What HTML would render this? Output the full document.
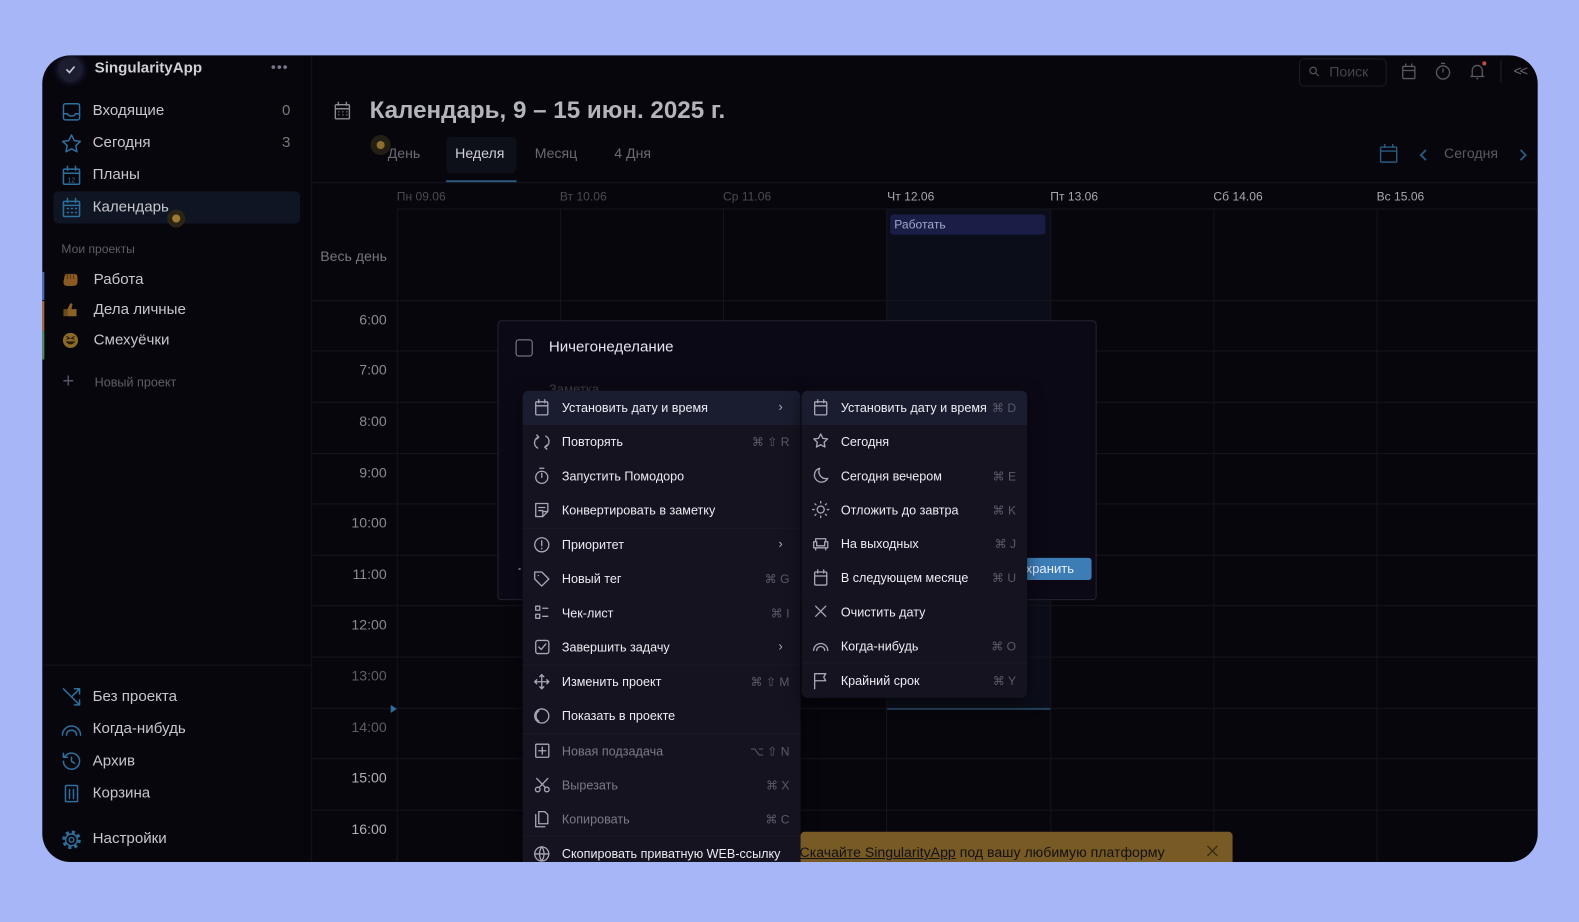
<!DOCTYPE html>
<html><head><meta charset="utf-8">
<style>
*{margin:0;padding:0;box-sizing:border-box}
body{width:1579px;height:916px;background:#a6b6f6;font-family:"Liberation Sans","DejaVu Sans",sans-serif;position:relative;overflow:hidden}
.wrap{position:absolute;left:0;top:0;width:1579px;height:916px;transform:scale(1.007);transform-origin:0 0}
.app{position:absolute;left:42px;top:55px;width:1485px;height:801px;background:#07060d;border-radius:28px;overflow:hidden}
.a{position:absolute;white-space:nowrap}
.t{line-height:20px;height:20px}
svg{position:absolute;overflow:visible}
.nav{font-size:15px;color:#c6c6ce}
.ic{fill:none;stroke:#2f6f9e;stroke-width:1.5;stroke-linecap:round;stroke-linejoin:round}
.mi{fill:none;stroke:#a8a8b8;stroke-width:1.3;stroke-linecap:round;stroke-linejoin:round}
.m{font-size:12.5px;color:#ececf2}
.sc{font-size:12px;color:#5a5a68;text-align:right}
.dim{color:#7a7a86}
.hl{position:absolute;background:#1b1a29;height:1px}
.vl{position:absolute;background:#16151f;width:1px}
.hr{position:absolute;background:#16151f;height:1px}
.tm{font-size:14px;color:#8a8a92;text-align:right;width:60px}
.dh{font-size:12px;color:#4a4a55}
</style></head><body><div class="wrap">
<div class="app">
<div class="vl" style="left:267px;top:0;height:801px;background:#15141d"></div>
<div class="hr" style="left:0;top:605px;width:267px;background:#15141d"></div>
<div class="a" style="left:17px;top:3px;width:22px;height:22px;border-radius:50%;background:#1c1d2e;box-shadow:0 0 8px #3a3c70"></div>
<svg style="left:23px;top:9px" width="10" height="10"><path d="M1 5 L4 8 L9 2" fill="none" stroke="#c8c8d8" stroke-width="1.6"/></svg>
<div class="a t" style="left:52px;top:3px;font-size:15px;font-weight:bold;color:#cfcfd8">SingularityApp</div>
<div class="a t" style="left:227px;top:1px;font-size:14px;color:#77778a;letter-spacing:1px">•••</div>
<div class="a" style="left:11px;top:135px;width:245px;height:32px;background:#0f1522;border-radius:5px"></div>
<svg style="left:20px;top:47px" width="18" height="18" class="ic"><rect x="1" y="1" width="16" height="16" rx="2"/><path d="M1 11h4c1 3 7 3 8 0h4"/></svg>
<div class="a t nav" style="left:50px;top:45px">Входящие</div><div class="a t nav" style="left:238px;top:45px;color:#777">0</div>
<svg style="left:19px;top:78px" width="20" height="20" class="ic"><path d="M10 1l2.7 5.6 6.1.8-4.5 4.2 1.1 6.1L10 14.8 4.6 17.7l1.1-6.1L1.2 7.4l6.1-.8z"/></svg>
<div class="a t nav" style="left:50px;top:77px">Сегодня</div><div class="a t nav" style="left:238px;top:77px;color:#777">3</div>
<svg style="left:20px;top:110px" width="18" height="18" class="ic"><rect x="1" y="3" width="16" height="15" rx="1"/><path d="M1 7h16M5 0v4M13 0v4"/><text x="5" y="16" font-size="7" fill="#2f6f9e" stroke="none" font-family="Liberation Sans">12</text></svg>
<div class="a t nav" style="left:50px;top:109px">Планы</div>
<svg style="left:20px;top:142px" width="18" height="18" class="ic"><rect x="1" y="3" width="16" height="15" rx="1"/><path d="M1 7h16M5 0v4M13 0v4M5 10h1M9 10h1M13 10h1M5 14h1M9 14h1M13 14h1"/></svg>
<div class="a t nav" style="left:50px;top:141px">Календарь</div>
<div class="a" style="left:124px;top:153px;width:18px;height:18px;border-radius:50%;background:#2a2416"></div>
<div class="a" style="left:129px;top:158px;width:8px;height:8px;border-radius:50%;background:#9e7a30"></div>
<div class="a t" style="left:19px;top:182px;font-size:12px;color:#5e5e6a">Мои проекты</div>
<div class="a" style="left:0;top:215px;width:2px;height:28px;background:#4a6ab0"></div>
<div class="a" style="left:0;top:244px;width:2px;height:30px;background:#b06a30"></div>
<div class="a" style="left:0;top:274px;width:2px;height:28px;background:#4a9060"></div>
<svg style="left:20px;top:216px" width="16" height="14"><path d="M2 4 Q2 1 5 1 L12 1 Q15 1 15 5 L15 9 Q15 13 10 13 L5 13 Q1 13 1 9 Z" fill="#8a5a22"/><path d="M5 1v5M8 1v5M11 1v5" stroke="#5a3812" stroke-width="1"/></svg>
<div class="a t nav" style="left:51px;top:213px">Работа</div>
<svg style="left:20px;top:245px" width="16" height="15"><path d="M5 14 L14 14 L14 7 L9 7 L10 2 Q8 0 7 3 L5 7 Z" fill="#8a6225"/><rect x="1" y="7" width="4" height="7" fill="#6a4a1a"/></svg>
<div class="a t nav" style="left:51px;top:243px">Дела личные</div>
<svg style="left:20px;top:275px" width="16" height="16"><circle cx="8" cy="8" r="7.5" fill="#8a6a28"/><path d="M3 9 Q8 15 13 9 Z" fill="#2a1a0a"/><path d="M4 4l3 2-3 1M12 4l-3 2 3 1" stroke="#2a1a0a" fill="none" stroke-width="1"/></svg>
<div class="a t nav" style="left:51px;top:273px">Смехуёчки</div>
<div class="a t" style="left:20px;top:314px;font-size:20px;color:#55556a">+</div>
<div class="a t" style="left:52px;top:315px;font-size:12.5px;color:#5e5e6a">Новый проект</div>
<svg style="left:20px;top:628px" width="18" height="18" class="ic"><path d="M1 1l16 16M12 1h5v5M17 1L10 8M12 17h5v-5"/></svg>
<div class="a t nav" style="left:50px;top:627px">Без проекта</div>
<svg style="left:19px;top:664px" width="20" height="12" class="ic"><path d="M1 11a9 9 0 0118 0M5 11a5 5 0 0110 0"/></svg>
<div class="a t nav" style="left:50px;top:659px">Когда-нибудь</div>
<svg style="left:20px;top:692px" width="18" height="18" class="ic"><path d="M2 5a8 8 0 11-1 4M1 1v4h4M9 5v4l3 2"/></svg>
<div class="a t nav" style="left:50px;top:691px">Архив</div>
<svg style="left:21px;top:724px" width="16" height="18" class="ic"><rect x="2" y="1" width="12" height="16" rx="1"/><path d="M6 5v9M10 5v9"/></svg>
<div class="a t nav" style="left:50px;top:723px">Корзина</div>
<svg style="left:19px;top:769px" width="20" height="20"><circle cx="10" cy="10" r="7.5" fill="none" stroke="#2f6f9e" stroke-width="3.5" stroke-dasharray="3 2.9"/><circle cx="10" cy="10" r="5.8" fill="#07060d" stroke="#2f6f9e" stroke-width="1.4"/><circle cx="10" cy="10" r="2.4" fill="none" stroke="#2f6f9e" stroke-width="1.4"/></svg>
<div class="a t nav" style="left:50px;top:768px">Настройки</div>

<svg style="left:290px;top:46px" width="16" height="18" fill="none" stroke="#8a8a92" stroke-width="1.4"><rect x="1" y="3" width="14" height="14" rx="1"/><path d="M1 7h14M4 0v4M12 0v4M4 10h1M8 10h1M12 10h1M4 13h1M8 13h1M12 13h1"/></svg>
<div class="a" style="left:325px;top:40px;font-size:24px;font-weight:bold;color:#b4b4bc;line-height:30px">Календарь, 9 – 15 июн. 2025 г.</div>
<div class="a" style="left:401px;top:81px;width:70px;height:36px;background:#0d1018;border-radius:5px"></div>
<div class="a" style="left:401px;top:124px;width:70px;height:2px;background:#2b5a80"></div>
<div class="a t" style="left:343px;top:87px;font-size:14px;color:#6a6a74">День</div>
<div class="a t" style="left:410px;top:87px;font-size:14px;color:#d0d0d8">Неделя</div>
<div class="a t" style="left:489px;top:87px;font-size:14px;color:#6a6a74">Месяц</div>
<div class="a t" style="left:568px;top:87px;font-size:14px;color:#6a6a74">4 Дня</div>
<div class="a" style="left:326px;top:79px;width:20px;height:20px;border-radius:50%;background:#231f15"></div>
<div class="a" style="left:332px;top:85px;width:8px;height:8px;border-radius:50%;background:#8e6e2c"></div>
<div class="a" style="left:1248px;top:3px;width:87px;height:28px;border:1px solid #1c1c26;border-radius:5px"></div>
<svg style="left:1258px;top:11px" width="10" height="10" fill="none" stroke="#555" stroke-width="1.2"><circle cx="4" cy="4" r="3.2"/><path d="M6.5 6.5L9.5 9.5"/></svg>
<div class="a t" style="left:1278px;top:6px;font-size:14px;color:#45454f">Поиск</div>
<svg style="left:1350px;top:8px" width="14" height="16" fill="none" stroke="#5a5a64" stroke-width="1.3"><rect x="1" y="3" width="12" height="12" rx="1"/><path d="M1 7h12M4 0v3M10 0v3"/></svg>
<svg style="left:1383px;top:7px" width="16" height="18" fill="none" stroke="#5a5a64" stroke-width="1.3"><circle cx="8" cy="10" r="6.5"/><path d="M6 1h4M8 10V6"/></svg>
<svg style="left:1417px;top:7px" width="16" height="18" fill="none" stroke="#5a5a64" stroke-width="1.3"><path d="M3 13V8a5 5 0 0110 0v5l1 1H2zM7 16h2"/></svg>
<div class="a" style="left:1430px;top:6px;width:4px;height:4px;border-radius:50%;background:#c0503a"></div>
<div class="a" style="left:1448px;top:5px;width:1px;height:22px;background:#22222c"></div>
<div class="a t" style="left:1461px;top:5px;font-size:14px;color:#6a6a74;letter-spacing:-2px">&lt;&lt;</div>
<svg style="left:1328px;top:88px" width="18" height="18" fill="none" stroke="#2a5c82" stroke-width="1.4"><rect x="1" y="3" width="16" height="15" rx="1"/><path d="M1 7h16M5 0v4M13 0v4"/></svg>
<svg style="left:1368px;top:93px" width="8" height="12" fill="none" stroke="#2a5c82" stroke-width="1.8"><path d="M6 1L1 6l5 5"/></svg>
<div class="a t" style="left:1392px;top:87px;font-size:14px;color:#5a5a64">Сегодня</div>
<svg style="left:1467px;top:93px" width="8" height="12" fill="none" stroke="#2a5c82" stroke-width="1.8"><path d="M1 1l5 5-5 5"/></svg>

<div class="hr" style="left:268px;top:126px;width:1217px"></div>
<div class="a" style="left:839px;top:152px;width:162px;height:498px;background:#0b0e18"></div>
<div class="hr" style="left:352px;top:152px;width:1133px"></div>
<div class="vl" style="left:352px;top:152px;height:650px"></div>
<div class="vl" style="left:514px;top:152px;height:650px"></div>
<div class="vl" style="left:676px;top:152px;height:650px"></div>
<div class="vl" style="left:838px;top:152px;height:650px"></div>
<div class="vl" style="left:1001px;top:152px;height:650px"></div>
<div class="vl" style="left:1163px;top:152px;height:650px"></div>
<div class="vl" style="left:1325px;top:152px;height:650px"></div>
<div class="a dh" style="left:352px;top:133px">Пн 09.06</div>
<div class="a dh" style="left:514px;top:133px">Вт 10.06</div>
<div class="a dh" style="left:676px;top:133px">Ср 11.06</div>
<div class="a dh" style="left:839px;top:133px;color:#a8a8b0">Чт 12.06</div>
<div class="a dh" style="left:1001px;top:133px;color:#a8a8b0">Пт 13.06</div>
<div class="a dh" style="left:1163px;top:133px;color:#a8a8b0">Сб 14.06</div>
<div class="a dh" style="left:1325px;top:133px;color:#a8a8b0">Вс 15.06</div>
<div class="a" style="left:842px;top:158px;width:154px;height:20px;background:#1a1d46;border-radius:3px;font-size:12px;color:#a0a6cc;line-height:20px;padding-left:4px">Работать</div>
<div class="a t" style="left:276px;top:189px;font-size:14px;color:#76767e">Весь день</div>
<div class="hr" style="left:268px;top:243px;width:1217px"></div>
<div class="hr" style="left:268px;top:293px;width:1217px"></div>
<div class="hr" style="left:268px;top:344px;width:1217px"></div>
<div class="hr" style="left:268px;top:395px;width:1217px"></div>
<div class="hr" style="left:268px;top:445px;width:1217px"></div>
<div class="hr" style="left:268px;top:496px;width:1217px"></div>
<div class="hr" style="left:268px;top:546px;width:1217px"></div>
<div class="hr" style="left:268px;top:597px;width:1217px"></div>
<div class="hr" style="left:268px;top:648px;width:1217px"></div>
<div class="hr" style="left:268px;top:698px;width:1217px"></div>
<div class="hr" style="left:268px;top:749px;width:1217px"></div>
<div class="a" style="left:839px;top:648px;width:162px;height:2px;background:#214058"></div>
<div class="a t tm" style="left:282px;top:252px">6:00</div>
<div class="a t tm" style="left:282px;top:302px">7:00</div>
<div class="a t tm" style="left:282px;top:353px">8:00</div>
<div class="a t tm" style="left:282px;top:404px">9:00</div>
<div class="a t tm" style="left:282px;top:454px">10:00</div>
<div class="a t tm" style="left:282px;top:505px">11:00</div>
<div class="a t tm" style="left:282px;top:555px">12:00</div>
<div class="a t tm" style="left:282px;top:606px;color:#5e5e66">13:00</div>
<div class="a t tm" style="left:282px;top:657px;color:#5e5e66">14:00</div>
<div class="a t tm" style="left:282px;top:707px;color:#b0b0b8">15:00</div>
<div class="a t tm" style="left:282px;top:758px;color:#b0b0b8">16:00</div>
<svg style="left:346px;top:645px" width="6" height="8"><path d="M0 0l6 4-6 4z" fill="#2f6f9e"/></svg>

<div class="a" style="left:452px;top:263px;width:595px;height:278px;background:#0c0916;border:1px solid #25232f;border-radius:4px"></div>
<div class="a" style="left:470px;top:282px;width:17px;height:17px;border:1.5px solid #8a8a96;border-radius:3px"></div>
<div class="a t" style="left:503px;top:280px;font-size:15px;color:#e4e4ec">Ничегонеделание</div>
<div class="a t" style="left:503px;top:322px;font-size:13px;color:#3e3e4a">Заметка</div>
<div class="a" style="left:950px;top:499px;width:92px;height:22px;background:#3d7db6;border-radius:3px;color:#e8f0ff;font-size:13px;line-height:22px;padding-left:10px">Сохранить</div>
<div class="a" style="left:473px;top:509px;width:2px;height:2px;background:#888"></div>

<div class="a" style="left:477px;top:333px;width:276px;height:480px;background:#15131f;border-radius:6px;box-shadow:0 4px 16px #0008"></div>
<div class="a" style="left:477px;top:333px;width:276px;height:34px;background:#1a1d30;border-radius:6px 6px 0 0"></div>
<div class="hl" style="left:477px;top:469px;width:276px"></div>
<div class="hl" style="left:477px;top:605px;width:276px"></div>
<div class="hl" style="left:477px;top:673px;width:276px"></div>
<div class="hl" style="left:477px;top:775px;width:276px"></div>
<svg style="left:489px;top:342px" width="14" height="16" class="mi"><rect x="1" y="2" width="12" height="13" rx="1"/><path d="M1 6h12M4 0v3M10 0v3"/></svg>
<div class="a t m" style="left:516px;top:340px">Установить дату и время</div>
<div class="a t" style="left:731px;top:339px;font-size:13px;color:#aaa">›</div>
<svg style="left:489px;top:376px" width="14" height="16" class="mi"><path d="M4 3a6 6 0 00-1 11M10 13a6 6 0 001-11M2 1l2 2-2 2M12 15l-2-2 2-2"/></svg>
<div class="a t m" style="left:516px;top:374px">Повторять</div><div class="a t sc" style="left:680px;top:374px;width:62px">⌘ ⇧ R</div>
<svg style="left:489px;top:409px" width="14" height="17" class="mi"><circle cx="7" cy="10" r="6"/><path d="M5 1h4M7 10V6"/></svg>
<div class="a t m" style="left:516px;top:408px">Запустить Помодоро</div>
<svg style="left:489px;top:444px" width="14" height="15" class="mi"><path d="M1 1h12v8l-5 5H1zM4 5h6M4 8h4M8 14V9h5"/></svg>
<div class="a t m" style="left:516px;top:442px">Конвертировать в заметку</div>
<svg style="left:488px;top:478px" width="16" height="16" class="mi"><circle cx="8" cy="8" r="7"/><path d="M8 4v5M8 11.5v.5"/></svg>
<div class="a t m" style="left:516px;top:476px">Приоритет</div><div class="a t" style="left:731px;top:475px;font-size:13px;color:#aaa">›</div>
<svg style="left:488px;top:512px" width="16" height="16" class="mi"><path d="M1 1h7l7 7-7 7-7-7zM4.5 4.5h.1"/></svg>
<div class="a t m" style="left:516px;top:510px">Новый тег</div><div class="a t sc" style="left:680px;top:510px;width:62px">⌘ G</div>
<svg style="left:489px;top:546px" width="14" height="14" class="mi"><rect x="1" y="1" width="4" height="4"/><rect x="1" y="9" width="4" height="4"/><path d="M8 3h5M8 11h5"/></svg>
<div class="a t m" style="left:516px;top:544px">Чек-лист</div><div class="a t sc" style="left:680px;top:544px;width:62px">⌘ I</div>
<svg style="left:489px;top:580px" width="14" height="15" class="mi"><rect x="1" y="1" width="13" height="13" rx="2"/><path d="M4 7.5l2.5 2.5L11 4.5"/></svg>
<div class="a t m" style="left:516px;top:578px">Завершить задачу</div><div class="a t" style="left:731px;top:577px;font-size:13px;color:#aaa">›</div>
<svg style="left:488px;top:614px" width="16" height="16" class="mi"><path d="M8 1v14M1 8h14M6 3l2-2 2 2M6 13l2 2 2-2M3 6L1 8l2 2M13 6l2 2-2 2"/></svg>
<div class="a t m" style="left:516px;top:612px">Изменить проект</div><div class="a t sc" style="left:680px;top:612px;width:62px">⌘ ⇧ M</div>
<svg style="left:488px;top:648px" width="16" height="16" class="mi"><circle cx="8" cy="8" r="7"/><path d="M5 3a6 6 0 000 10"/></svg>
<div class="a t m" style="left:516px;top:646px">Показать в проекте</div>
<svg style="left:489px;top:683px" width="14" height="15" class="mi"><rect x="1" y="1" width="13" height="13" rx="1"/><path d="M7.5 4v7M4 7.5h7"/></svg>
<div class="a t m dim" style="left:516px;top:681px">Новая подзадача</div><div class="a t sc" style="left:680px;top:681px;width:62px">⌥ ⇧ N</div>
<svg style="left:489px;top:717px" width="15" height="15" class="mi"><circle cx="3" cy="12" r="2.3"/><circle cx="12" cy="12" r="2.3"/><path d="M4.5 10L13 1M10.5 10L2 1"/></svg>
<div class="a t m dim" style="left:516px;top:715px">Вырезать</div><div class="a t sc" style="left:680px;top:715px;width:62px">⌘ X</div>
<svg style="left:489px;top:750px" width="14" height="17" class="mi"><path d="M4 1h6l3 3v9H4zM1 4v12h9"/></svg>
<div class="a t m dim" style="left:516px;top:749px">Копировать</div><div class="a t sc" style="left:680px;top:749px;width:62px">⌘ C</div>
<svg style="left:488px;top:785px" width="16" height="16" class="mi"><circle cx="8" cy="8" r="7"/><path d="M1 8h14M8 1c-3 4-3 10 0 14M8 1c3 4 3 10 0 14"/></svg>
<div class="a t m" style="left:516px;top:783px">Скопировать приватную WEB-ссылку</div>

<div class="a" style="left:754px;top:333px;width:224px;height:305px;background:#15131f;border-radius:6px;box-shadow:0 4px 16px #0008"></div>
<div class="a" style="left:754px;top:333px;width:224px;height:34px;background:#1a1d30;border-radius:6px 6px 0 0"></div>
<div class="hl" style="left:754px;top:603px;width:224px"></div>
<svg style="left:766px;top:342px" width="14" height="16" class="mi"><rect x="1" y="2" width="12" height="13" rx="1"/><path d="M1 6h12M4 0v3M10 0v3"/></svg>
<div class="a t m" style="left:793px;top:340px">Установить дату и время</div><div class="a t sc" style="left:920px;top:340px;width:47px">⌘ D</div>
<svg style="left:765px;top:375px" width="16" height="16" class="mi"><path d="M8 1l2.1 4.3 4.7.6-3.4 3.3.8 4.7L8 11.6 3.8 13.9l.8-4.7L1.2 5.9l4.7-.6z"/></svg>
<div class="a t m" style="left:793px;top:374px">Сегодня</div>
<svg style="left:766px;top:409px" width="15" height="16" class="mi"><path d="M6 1a7 7 0 108 10A7 7 0 016 1z"/></svg>
<div class="a t m" style="left:793px;top:408px">Сегодня вечером</div><div class="a t sc" style="left:920px;top:408px;width:47px">⌘ E</div>
<svg style="left:765px;top:443px" width="16" height="16" class="mi"><circle cx="8" cy="8" r="3.5"/><path d="M8 0v1.5M8 14.5V16M0 8h1.5M14.5 8H16M2.3 2.3l1 1M12.7 12.7l1 1M2.3 13.7l1-1M12.7 3.3l1-1"/></svg>
<div class="a t m" style="left:793px;top:442px">Отложить до завтра</div><div class="a t sc" style="left:920px;top:442px;width:47px">⌘ K</div>
<svg style="left:765px;top:478px" width="16" height="14" class="mi"><path d="M3 5V2h10v3M1 5h3v4h8V5h3v6H1zM3 11v2M13 11v2"/></svg>
<div class="a t m" style="left:793px;top:475px">На выходных</div><div class="a t sc" style="left:920px;top:475px;width:47px">⌘ J</div>
<svg style="left:766px;top:511px" width="14" height="16" class="mi"><rect x="1" y="2" width="12" height="13" rx="1"/><path d="M1 6h12M4 0v3M10 0v3"/></svg>
<div class="a t m" style="left:793px;top:509px">В следующем месяце</div><div class="a t sc" style="left:920px;top:509px;width:47px">⌘ U</div>
<svg style="left:767px;top:546px" width="12" height="12" class="mi"><path d="M1 1l10 10M11 1L1 11"/></svg>
<div class="a t m" style="left:793px;top:543px">Очистить дату</div>
<svg style="left:765px;top:582px" width="16" height="10" class="mi"><path d="M1 9a7 7 0 0114 0M4 9a4 4 0 018 0"/></svg>
<div class="a t m" style="left:793px;top:577px">Когда-нибудь</div><div class="a t sc" style="left:920px;top:577px;width:47px">⌘ O</div>
<svg style="left:766px;top:613px" width="14" height="16" class="mi"><path d="M1 16V1h11l-2 3.5 2 3.5H1"/></svg>
<div class="a t m" style="left:793px;top:611px">Крайний срок</div><div class="a t sc" style="left:920px;top:611px;width:47px">⌘ Y</div>

<div class="a" style="left:753px;top:771px;width:429px;height:32px;background:#785b24;border-radius:4px 4px 0 0"></div>
<div class="a t" style="left:752px;top:781px;font-size:14px;color:#141018"><span style="text-decoration:underline">Скачайте SingularityApp</span> под вашу любимую платформу</div>
<svg style="left:1156px;top:784px" width="12" height="12" fill="none" stroke="#3a2d14" stroke-width="1.4"><path d="M1 1l10 10M11 1L1 11"/></svg>
</div>
</div></body></html>
